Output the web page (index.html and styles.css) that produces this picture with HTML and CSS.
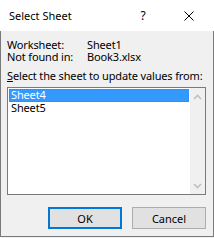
FILE: index.html
```html
<!DOCTYPE html>
<html lang="en">
<head>
    <meta charset="UTF-8">
    <title>Select Sheet</title>
    <link rel="stylesheet" href="styles.css">
</head>
<body>

    <div class="window">
        <div class="titlebar">
            <span class="title">Select Sheet</span>
            <span class="caption-btn help">?</span>
            <span class="caption-btn close">
                <svg width="10" height="10" viewBox="0 0 10 10">
                    <path d="M0.5 0.5 L9.5 9.5 M9.5 0.5 L0.5 9.5" stroke="#000" stroke-width="1" fill="none"/>
                </svg>
            </span>
        </div>

        <div class="dialog-body">
            <div class="info">
                <span>Worksheet:</span><span>Sheet1</span>
                <span>Not found in:</span><span>Book3.xlsx</span>
            </div>

            <div class="prompt"><u>S</u>elect the sheet to update values from:</div>

            <div class="listbox">
                <ul class="items">
                    <li class="selected">Sheet4</li>
                    <li>Sheet5</li>
                </ul>
                <div class="scrollbar">
                    <div class="arrow">
                        <svg width="9" height="6" viewBox="0 0 9 6">
                            <polyline points="1,5 4.5,1.5 8,5" stroke="#bfbfbf" stroke-width="1.6" fill="none"/>
                        </svg>
                    </div>
                    <div class="arrow">
                        <svg width="9" height="6" viewBox="0 0 9 6">
                            <polyline points="1,1 4.5,4.5 8,1" stroke="#bfbfbf" stroke-width="1.6" fill="none"/>
                        </svg>
                    </div>
                </div>
            </div>

            <div class="buttons">
                <button class="btn default">OK</button>
                <button class="btn">Cancel</button>
            </div>
        </div>
    </div>

</body>
</html>
```

FILE: styles.css
```css
body {
    margin: 0;
    font-family: "Noto Sans", "Open Sans", sans-serif;
    font-size: 11px;
    color: #000;
    background: #f0f0f0;
}

.window {
    width: 214px;
    height: 237px;
}

/* Title bar */
.titlebar {
    display: flex;
    align-items: center;
    height: 31px;
    background: #fff;
    padding-left: 9px;
}
.title {
    flex: 1;
}
.caption-btn {
    width: 46px;
    height: 31px;
    display: flex;
    align-items: center;
    justify-content: center;
}
.help {
    font-size: 12px;
}
.close {
    margin-right: 2px;
}

/* Dialog */
.dialog-body {
    box-sizing: border-box;
    height: 206px;
    background: #f0f0f0;
    border: 1px solid #7a7a7a;
    border-top: none;
    padding: 8px 7px 0 6px;
    letter-spacing: -0.15px;
}
.info {
    display: grid;
    grid-template-columns: 80px auto;
    line-height: 12px;
}
.prompt {
    margin-top: 7px;
    line-height: 12px;
}

.listbox {
    box-sizing: border-box;
    display: flex;
    width: 199px;
    height: 108px;
    margin-top: 5px;
    background: #fff;
    border: 1px solid #7a7a7a;
}
.items {
    flex: 1;
    list-style: none;
    margin: 0;
    padding: 1px;
}
.items li {
    height: 11px;
    line-height: 11px;
    padding: 0 0 2px 2px;
}
.items li.selected {
    background: #3399ff;
    color: #fff;
    outline: 1px dotted #cc6600;
    outline-offset: -1px;
}
.scrollbar {
    width: 15px;
    background: #f0f0f0;
    display: flex;
    flex-direction: column;
    justify-content: space-between;
}
.arrow {
    height: 17px;
    display: flex;
    align-items: center;
    justify-content: center;
}

.buttons {
    display: flex;
    justify-content: flex-end;
    gap: 10px;
    margin-top: 12px;
}
.btn {
    box-sizing: border-box;
    width: 74px;
    height: 22px;
    padding: 0;
    background: #e1e1e1;
    border: 1px solid #adadad;
    font-family: "Noto Sans", "Open Sans", sans-serif;
    font-size: 11px;
    color: #000;
}
.btn.default {
    border: 2px solid #0078d7;
}
```
